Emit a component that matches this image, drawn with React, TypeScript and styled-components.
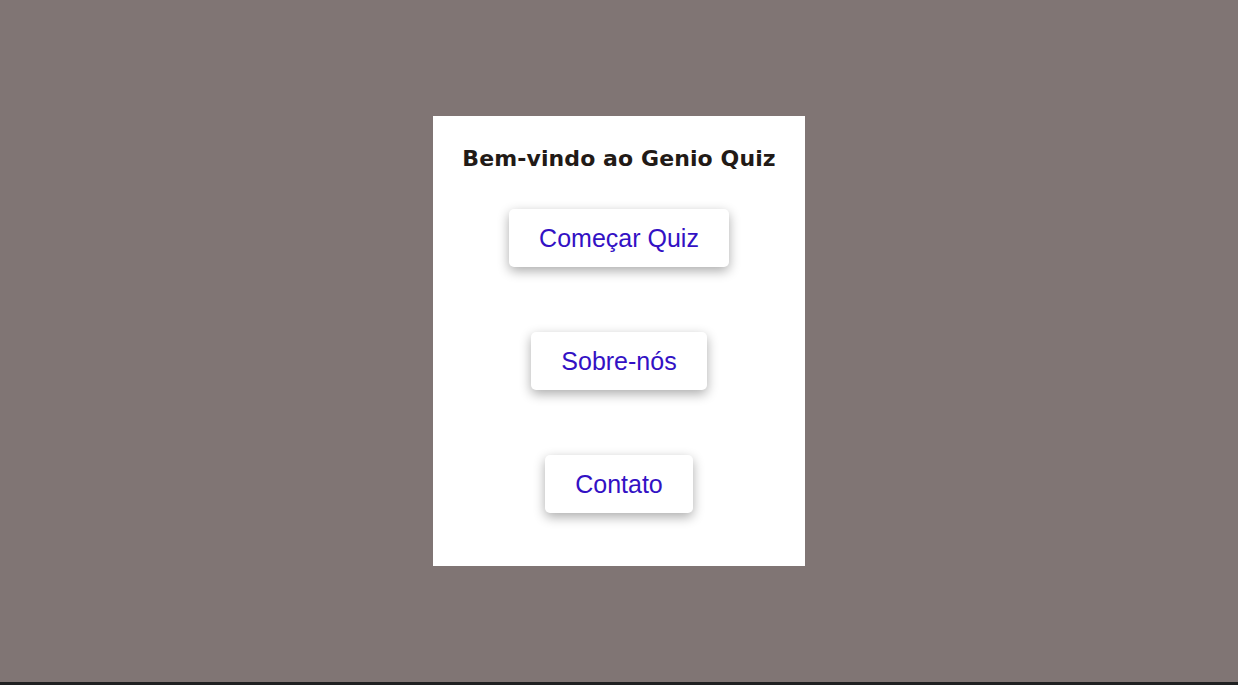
import React from "react";
import styled, { createGlobalStyle } from "styled-components";

const Global = createGlobalStyle`
  html, body { margin: 0; padding: 0; }
  body { background: #807574; font-family: "Liberation Sans", Arial, sans-serif; }
`;

const Page = styled.div`
  height: 100vh;
  display: flex;
  flex-direction: column;
`;

const Stage = styled.main`
  flex: 1;
  display: flex;
  justify-content: center;
  align-items: flex-start;
  padding-top: 116px;
  box-sizing: border-box;
`;

const Strip = styled.div`
  height: 3px;
  background: #1f2021;
`;

const Card = styled.section`
  width: 372px;
  height: 450px;
  background: #ffffff;
  box-sizing: border-box;
  padding-top: 29px;
  display: flex;
  flex-direction: column;
  align-items: center;
`;

const Title = styled.h1`
  margin: 0 0 36px;
  font-family: "DejaVu Sans", "Noto Sans", sans-serif;
  font-weight: 700;
  font-size: 22px;
  line-height: 28px;
  color: #221a16;
  letter-spacing: 0.1px;
  white-space: nowrap;
`;

const Menu = styled.nav`
  display: flex;
  flex-direction: column;
  align-items: center;
  gap: 65px;
`;

const MenuButton = styled.button`
  border: none;
  background: #ffffff;
  border-radius: 5px;
  padding: 15px 30px;
  font-family: "Liberation Sans", Arial, sans-serif;
  font-size: 25px;
  line-height: 28px;
  color: #3311c4;
  box-shadow: 0 4px 12px rgba(0, 0, 0, 0.33);
  cursor: pointer;
`;

export default function App() {
  return (
    <Page>
      <Global />
      <Stage>
        <Card>
          <Title>Bem-vindo ao Genio Quiz</Title>
          <Menu>
            <MenuButton>Começar Quiz</MenuButton>
            <MenuButton>Sobre-nós</MenuButton>
            <MenuButton>Contato</MenuButton>
          </Menu>
        </Card>
      </Stage>
      <Strip />
    </Page>
  );
}
